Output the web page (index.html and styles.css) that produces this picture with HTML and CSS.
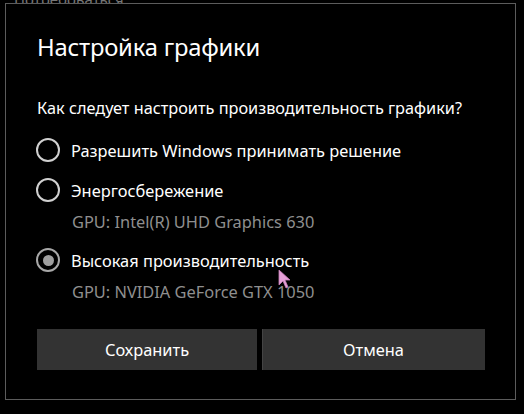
FILE: index.html
```html
<!DOCTYPE html>
<html lang="ru">
<head>
<meta charset="utf-8">
<link rel="stylesheet" href="styles.css">
</head>
<body>
<div class="backdrop-text">Потребоваться</div>
<div class="dialog">
  <h1 class="title">Настройка графики</h1>
  <p class="question">Как следует настроить производительность графики?</p>
  <div class="options">
    <label class="option">
      <span class="radio"></span>
      <span class="label">Разрешить Windows принимать решение</span>
    </label>
    <label class="option">
      <span class="radio"></span>
      <span class="label">Энергосбережение</span>
    </label>
    <div class="gpu">GPU: Intel(R) UHD Graphics 630</div>
    <label class="option">
      <span class="radio radio-checked"><span class="dot"></span></span>
      <span class="label">Высокая производительность</span>
      <svg class="cursor" width="14" height="20" viewBox="0 0 14 20"><path d="M1 1 L1 16 L5 12 L8 19 L10 18 L7 11 L12 11 Z" fill="#e6a0d8" stroke="#c77fb8" stroke-width="0.8"/></svg>
    </label>
    <div class="gpu">GPU: NVIDIA GeForce GTX 1050</div>
  </div>
  <div class="buttons">
    <button class="btn">Сохранить</button>
    <button class="btn btn-secondary">Отмена</button>
  </div>
</div>
</body>
</html>
```
FILE: styles.css
```css
html, body {
  margin: 0;
  padding: 0;
  background: #000;
}
body {
  width: 524px;
  height: 414px;
  overflow: hidden;
  position: relative;
  font-family: "Noto Sans", "Open Sans", sans-serif;
  color: #fff;
}
.backdrop-text {
  position: absolute;
  left: 14px;
  top: -11px;
  font-size: 15px;
  color: #777;
}
.dialog {
  position: relative;
  margin: 3px 0 0 5px;
  width: 511px;
  height: 397px;
  box-sizing: border-box;
  border: 1px solid #5c5c5c;
  background: #000;
  padding: 27px 31px 0 31px;
}
.title {
  margin: 0;
  font-weight: 400;
  font-size: 23.8px;
  line-height: 32px;
  letter-spacing: -0.2px;
}
.question {
  margin: 35px 0 0 0;
  font-size: 16.3px;
  line-height: 20px;
}
.options {
  margin-top: 12px;
  display: flex;
  flex-direction: column;
}
.option {
  position: relative;
  display: flex;
  align-items: center;
  height: 40px;
  font-size: 16.4px;
}
.radio {
  width: 24px;
  height: 24px;
  box-sizing: border-box;
  border: 2px solid #d0d0d0;
  border-radius: 50%;
  margin-left: -1px;
  margin-right: 11px;
  display: flex;
  align-items: center;
  justify-content: center;
  flex: none;
}
.radio-checked {
  border-color: #a8a8a8;
}
.dot {
  width: 11px;
  height: 11px;
  border-radius: 50%;
  background: #a0a0a0;
}
.gpu {
  padding-left: 35px;
  font-size: 16.4px;
  line-height: 24px;
  color: #8f8f8f;
  margin-bottom: 6px;
}
.gpu:last-child {
  margin-bottom: 0;
}
.cursor {
  position: absolute;
  left: 241px;
  top: 29px;
}
.buttons {
  margin-top: 25px;
  display: grid;
  grid-template-columns: 220px 223px;
  column-gap: 5px;
}
.btn {
  height: 41px;
  border: none;
  background: #333;
  color: #fff;
  font-family: "Noto Sans", "Open Sans", sans-serif;
  font-size: 16.4px;
  padding: 0;
}
.btn-secondary {
  box-shadow: inset 1px 0 0 #444;
}
```
